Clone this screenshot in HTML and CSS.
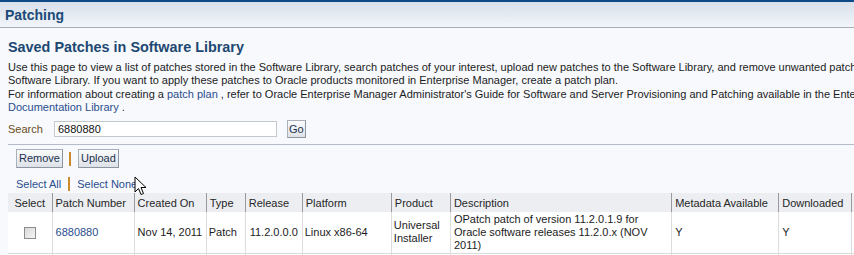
FILE: index.html
```html
<!DOCTYPE html>
<html>
<head>
<meta charset="utf-8">
<link rel="stylesheet" href="styles.css">
</head>
<body>
<div class="page">
  <div class="pagehead">Patching</div>
  <div class="content">
    <h2 class="title">Saved Patches in Software Library</h2>
    <p class="intro">Use this page to view a list of patches stored in the Software Library, search patches of your interest, upload new patches to the Software Library, and remove unwanted patches from the<br>Software Library. If you want to apply these patches to Oracle products monitored in Enterprise Manager, create a patch plan.<br>For information about creating a <a class="lnk" href="#">patch plan</a> , refer to Oracle Enterprise Manager Administrator's Guide for Software and Server Provisioning and Patching available in the Enterprise Manager<br><a class="lnk" href="#">Documentation Library</a> .</p>
    <div class="searchrow">
      <span class="slabel">Search</span>
      <span class="sinput">6880880</span>
      <span class="btn gobtn">Go</span>
    </div>
    <div class="toolbar">
      <span class="btn">Remove</span>
      <span class="sep"></span>
      <span class="btn">Upload</span>
    </div>
    <div class="selrow">
      <a class="lnk" href="#">Select All</a>
      <span class="sep sep-s"></span>
      <a class="lnk" href="#">Select None</a>
    </div>
    <table class="grid">
      <colgroup>
        <col class="c1"><col class="c2"><col class="c3"><col class="c4"><col class="c5"><col class="c6"><col class="c7"><col class="c8"><col class="c9"><col class="c10"><col class="c11">
      </colgroup>
      <thead>
        <tr>
          <th class="center">Select</th><th>Patch Number</th><th>Created On</th><th>Type</th><th>Release</th><th>Platform</th><th>Product</th><th>Description</th><th>Metadata Available</th><th>Downloaded</th><th></th>
        </tr>
      </thead>
      <tbody>
        <tr>
          <td class="center"><span class="cbox"></span></td>
          <td><a class="lnk" href="#">6880880</a></td>
          <td>Nov 14, 2011</td>
          <td class="tight">Patch</td>
          <td class="rel">11.2.0.0.0</td>
          <td class="tight">Linux x86-64</td>
          <td class="tight">Universal<br>Installer</td>
          <td class="desc">OPatch patch of version 11.2.0.1.9 for<br>Oracle software releases 11.2.0.x (NOV<br>2011)</td>
          <td>Y</td>
          <td>Y</td>
          <td></td>
        </tr>
        <tr class="next"><td></td><td></td><td></td><td></td><td></td><td></td><td></td><td></td><td></td><td></td><td></td></tr>
      </tbody>
    </table>
  </div>
  <svg class="cursor" width="13" height="20" viewBox="0 0 13 20">
    <path d="M1 1 L1 16 L4.5 12.5 L7 18.5 L9.5 17.5 L7 11.5 L12 11.5 Z" fill="#fff" stroke="#000" stroke-width="1" stroke-linejoin="miter"/>
  </svg>
</div>
</body>
</html>
```

FILE: styles.css
```css
html, body {
  margin: 0;
  padding: 0;
  background: #f7f9fc;
  overflow: hidden;
}
body {
  font-family: "Liberation Sans", Arial, sans-serif;
  font-size: 11px;
  color: #1c1c1c;
}
.page {
  position: relative;
  width: 1100px;
  height: 255px;
  overflow: hidden;
}
.pagehead {
  border-top: 2px solid #0c4a88;
  height: 25px;
  line-height: 27px;
  padding-left: 5px;
  background: linear-gradient(#d8e0eb, #f2f5f9);
  border-bottom: 1px solid #a8afb9;
  font-weight: bold;
  font-size: 14px;
  color: #1b4a78;
}
.content {
  padding-left: 8px;
}
.title {
  margin: 11px 0 0 0;
  font-size: 14.4px;
  line-height: 17px;
  font-weight: bold;
  color: #1d4872;
}
.intro {
  margin: 5px 0 0 0;
  line-height: 13.3px;
  white-space: nowrap;
}
.lnk {
  color: #2a4e8e;
  text-decoration: none;
}
.searchrow {
  display: flex;
  align-items: center;
  height: 18px;
  margin-top: 6px;
  padding-bottom: 6px;
  border-bottom: 1px solid #b4bcc8;
  width: 1000px;
}
.slabel {
  color: #6a4d22;
  width: 46px;
}
.sinput {
  box-sizing: border-box;
  width: 223px;
  height: 16px;
  line-height: 14px;
  border: 1px solid #c3c9d1;
  background: #fff;
  padding-left: 3px;
  color: #111;
}
.btn {
  box-sizing: border-box;
  display: inline-block;
  height: 19px;
  line-height: 17px;
  padding: 0 2px;
  border: 1px solid #a8b0ba;
  border-right-color: #8c949f;
  border-bottom-color: #8c949f;
  background: linear-gradient(#fbfbfc, #dde2e8);
  color: #22324e;
}
.gobtn {
  margin-left: 10px;
  height: 18px;
  width: 19px;
  padding: 0 1px;
}
.toolbar {
  display: flex;
  align-items: center;
  margin-top: 4px;
  padding-left: 8px;
  height: 19px;
}
.sep {
  display: inline-block;
  width: 2px;
  height: 14px;
  background: #c98a2c;
  margin: 0 7px 0 6px;
}
.selrow {
  display: flex;
  align-items: center;
  padding-left: 8px;
  margin-top: 9px;
  height: 14px;
  line-height: 14px;
}
.sep-s {
  margin: 0 7px 0 7px;
  height: 14px;
}
.grid {
  margin-top: 2px;
  border-collapse: collapse;
  table-layout: fixed;
  width: 944px;
}
.c1 { width: 44px; }
.c2 { width: 82px; }
.c3 { width: 72px; }
.c4 { width: 39px; }
.c5 { width: 57px; }
.c6 { width: 89px; }
.c7 { width: 59px; }
.c8 { width: 221px; }
.c9 { width: 107px; }
.c10 { width: 73px; }
.c11 { width: 100px; }
.grid th {
  height: 19px;
  padding: 0 3px;
  text-align: left;
  font-weight: normal;
  color: #262626;
  background: #eceef2;
  border-left: 1px solid #9a9a9a;
  white-space: nowrap;
  vertical-align: middle;
}
.grid th:first-child {
  border-left: none;
}
.grid th.center {
  text-align: center;
}
.grid td {
  height: 41px;
  box-sizing: border-box;
  padding: 0 3px;
  background: #fff;
  border-left: 1px solid #dcdcdc;
  border-bottom: 1px solid #dcdcdc;
  vertical-align: middle;
  line-height: 13px;
  white-space: nowrap;
}
.grid td:first-child {
  border-left: none;
}
.grid td.center {
  text-align: center;
}
.grid td.tight {
  padding: 0 2px;
}
.grid td.rel {
  padding-left: 4px;
}
.grid td.desc {
  padding-left: 3px;
}
.grid tr.next td {
  height: 20px;
}
.cbox {
  display: inline-block;
  width: 10px;
  height: 10px;
  border: 1px solid #8c8c8c;
  background: linear-gradient(135deg, #d8d8d8, #f6f6f6);
  vertical-align: middle;
}
.cursor {
  position: absolute;
  left: 134px;
  top: 176px;
}
```
